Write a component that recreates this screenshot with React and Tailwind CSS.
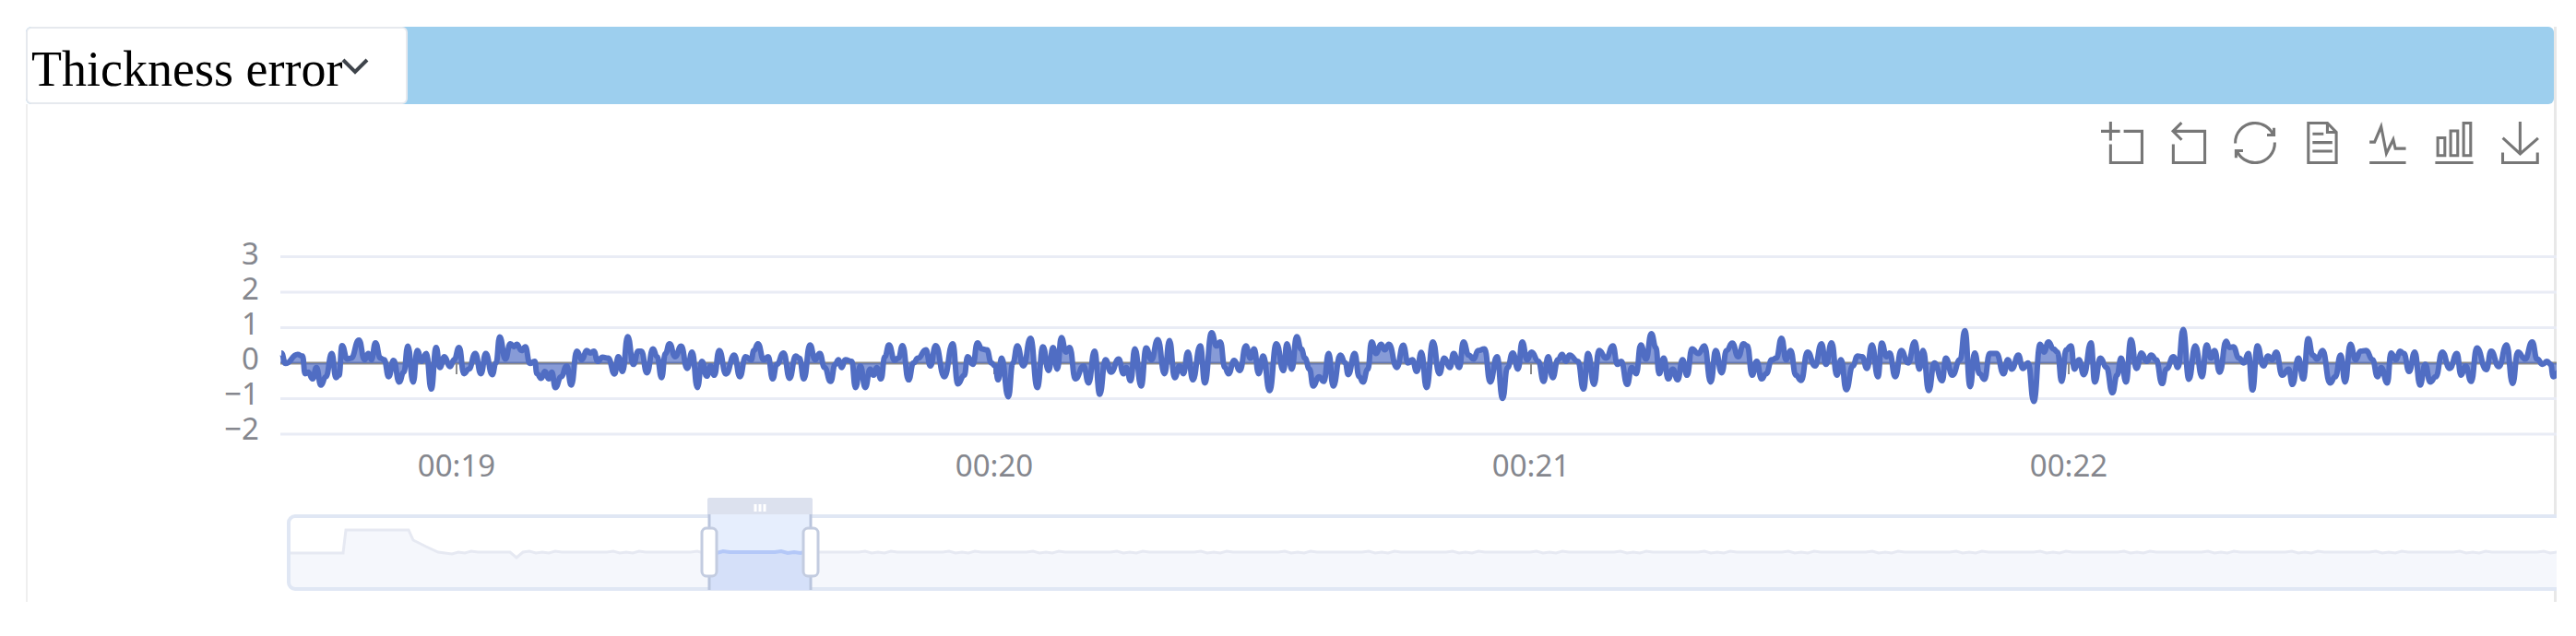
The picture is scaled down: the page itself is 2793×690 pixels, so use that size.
import { useState } from 'react';

const ERROR_TYPES = [ 'Thickness error', 'Width error', 'Temperature error' ];

const TOOLS = [
	{ title: 'Zoom', path: 'M0,13.5h26.9 M13.5,26.9V0 M32.1,13.5H58V58H13.5 V32.1' },
	{ title: 'Zoom reset', path: 'M20,1.4L7.9,13.5l12.3,12.3 M8.3,13.5H52.9v44.6 H8.3v-26' },
	{ title: 'Restore', path: 'M47,18.9h9.8V8.7 M56.3,20.1 C52.1,9,40.5,0.6,26.8,2.1C12.6,3.7,1.6,16.2,2.1,30.6 M13,41.1H3.1v10.2 M3.7,39.9c4.2,11.1,15.8,19.5,29.5,18 c14.2-1.6,25.2-14.1,24.7-28.5' },
	{ title: 'Data view', path: 'M17.5,17.3H33 M45.4,29.5h-28 M11.5,2v56H51V14.8L38.4,2H11.5z M38.4,2.2v12.7H51 M45.4,41.7h-28' },
	{ title: 'Line chart', path: 'M4.1,28.9h7.1l9.3-22l7.4,38l9.7-19.7l3,12.8h14.9M4.1,58h51.4' },
	{ title: 'Bar chart', path: 'M6.7,22.9h10V48h-10V22.9zM24.9,13h10v35h-10V13zM43.2,2h10v46h-10V2zM3.1,58h53.7' },
	{ title: 'Save as image', path: 'M4.7,22.9L29.3,45.5L54.7,23.4M4.6,43.6L4.6,58L53.8,58L53.8,43.6M29.2,45.1L29.2,0' },
];

// Gauge readings, one block per buffer: [ tick, raw count ].
const BLOCKS = [
	{
		start: 0,
		samples: [
			[ 37, 128 ], [ 48, 162 ], [ 80, 133 ], [ 93, 138 ], [ 100, 195 ], [ 108, 190 ], [ 120, 212 ], [ 130, 175 ], [ 142, 232 ], [ 155, 205 ],
			[ 171, 130 ], [ 182, 208 ], [ 190, 200 ], [ 198, 104 ], [ 212, 148 ], [ 222, 145 ], [ 243, 86 ], [ 258, 150 ], [ 268, 130 ], [ 276, 150 ],
			[ 287, 95 ], [ 300, 145 ], [ 310, 150 ], [ 322, 205 ], [ 335, 152 ], [ 350, 222 ], [ 362, 190 ], [ 373, 106 ], [ 387, 222 ], [ 398, 120 ],
			[ 410, 155 ], [ 422, 130 ], [ 435, 245 ], [ 448, 110 ], [ 458, 175 ], [ 470, 140 ], [ 485, 172 ], [ 496, 150 ], [ 509, 110 ], [ 522, 195 ],
			[ 535, 180 ], [ 552, 130 ], [ 567, 195 ], [ 580, 130 ], [ 597, 198 ], [ 607, 160 ], [ 617, 76 ], [ 632, 148 ], [ 645, 98 ], [ 655, 108 ],
			[ 662, 100 ], [ 675, 120 ], [ 685, 108 ], [ 697, 162 ], [ 710, 155 ], [ 716, 195 ], [ 727, 210 ], [ 737, 188 ], [ 747, 212 ], [ 755, 190 ],
			[ 765, 240 ], [ 780, 205 ], [ 795, 170 ], [ 807, 232 ], [ 822, 122 ], [ 835, 150 ], [ 848, 120 ], [ 858, 128 ], [ 867, 122 ], [ 877, 155 ],
			[ 890, 142 ], [ 905, 145 ], [ 922, 196 ], [ 932, 140 ], [ 943, 188 ], [ 957, 75 ], [ 972, 165 ], [ 985, 122 ], [ 993, 122 ], [ 1008, 192 ],
			[ 1024, 115 ], [ 1035, 140 ], [ 1047, 208 ], [ 1057, 130 ], [ 1068, 98 ], [ 1083, 140 ], [ 1099, 106 ], [ 1115, 178 ], [ 1128, 125 ], [ 1142, 240 ],
			[ 1154, 155 ], [ 1167, 203 ], [ 1177, 170 ], [ 1187, 200 ], [ 1200, 120 ], [ 1218, 196 ], [ 1240, 135 ], [ 1255, 205 ], [ 1270, 140 ], [ 1285, 150 ],
			[ 1292, 120 ], [ 1303, 98 ], [ 1318, 150 ], [ 1330, 140 ], [ 1342, 212 ], [ 1353, 165 ], [ 1371, 128 ], [ 1387, 210 ], [ 1403, 138 ], [ 1413, 145 ],
			[ 1425, 212 ], [ 1441, 102 ], [ 1455, 150 ], [ 1467, 130 ], [ 1480, 175 ], [ 1496, 220 ], [ 1508, 165 ], [ 1517, 150 ], [ 1525, 175 ], [ 1535, 150 ],
			[ 1552, 155 ], [ 1562, 240 ],
		],
	},
	{
		start: 1568,
		samples: [
			[ 7, 170 ], [ 20, 240 ], [ 33, 180 ], [ 42, 200 ], [ 50, 175 ], [ 62, 212 ], [ 72, 140 ], [ 83, 102 ], [ 98, 152 ], [ 108, 145 ],
			[ 119, 104 ], [ 135, 215 ], [ 148, 160 ], [ 160, 145 ], [ 181, 118 ], [ 193, 170 ], [ 207, 104 ], [ 230, 205 ], [ 252, 98 ], [ 266, 228 ],
			[ 283, 200 ], [ 292, 140 ], [ 306, 165 ], [ 318, 95 ], [ 330, 115 ], [ 343, 118 ], [ 355, 160 ], [ 365, 170 ], [ 373, 215 ], [ 382, 145 ],
			[ 400, 270 ], [ 412, 160 ], [ 424, 105 ], [ 440, 170 ], [ 459, 80 ], [ 477, 240 ], [ 492, 108 ], [ 507, 185 ], [ 519, 110 ], [ 530, 180 ],
			[ 541, 78 ], [ 553, 125 ], [ 563, 110 ], [ 578, 212 ], [ 600, 170 ], [ 613, 225 ], [ 629, 122 ], [ 643, 262 ], [ 658, 150 ], [ 673, 190 ],
			[ 693, 148 ], [ 706, 195 ], [ 713, 175 ], [ 725, 218 ], [ 736, 115 ], [ 753, 235 ], [ 766, 112 ], [ 780, 150 ], [ 797, 85 ], [ 815, 195 ],
			[ 828, 88 ], [ 842, 208 ], [ 855, 170 ], [ 865, 195 ], [ 877, 125 ], [ 890, 215 ], [ 910, 105 ], [ 922, 225 ], [ 940, 62 ], [ 953, 105 ],
			[ 963, 92 ], [ 975, 175 ], [ 985, 195 ], [ 1000, 152 ], [ 1015, 185 ], [ 1031, 105 ], [ 1043, 145 ], [ 1053, 115 ], [ 1065, 195 ], [ 1077, 138 ],
			[ 1094, 250 ], [ 1112, 98 ], [ 1131, 185 ], [ 1140, 98 ], [ 1153, 180 ], [ 1166, 75 ], [ 1178, 115 ], [ 1188, 145 ], [ 1200, 180 ], [ 1210, 235 ],
			[ 1225, 205 ], [ 1238, 220 ], [ 1251, 130 ], [ 1263, 235 ], [ 1282, 135 ], [ 1295, 160 ], [ 1303, 198 ], [ 1320, 130 ], [ 1332, 205 ], [ 1342, 222 ],
			[ 1355, 180 ], [ 1365, 92 ], [ 1377, 130 ], [ 1390, 100 ], [ 1400, 118 ], [ 1411, 100 ], [ 1432, 175 ], [ 1449, 103 ], [ 1462, 160 ], [ 1473, 150 ],
			[ 1485, 188 ], [ 1497, 126 ], [ 1511, 240 ], [ 1528, 92 ], [ 1545, 195 ], [ 1558, 145 ],
		],
	},
	{
		start: 3136,
		samples: [
			[ 5, 175 ], [ 15, 130 ], [ 30, 175 ], [ 41, 92 ], [ 55, 135 ], [ 68, 148 ], [ 80, 120 ], [ 97, 115 ], [ 112, 222 ], [ 130, 140 ],
			[ 145, 275 ], [ 158, 175 ], [ 172, 128 ], [ 186, 180 ], [ 197, 92 ], [ 210, 150 ], [ 222, 125 ], [ 240, 155 ], [ 254, 220 ], [ 266, 140 ],
			[ 278, 208 ], [ 292, 150 ], [ 303, 133 ], [ 313, 155 ], [ 323, 135 ], [ 345, 155 ], [ 360, 245 ], [ 372, 130 ], [ 388, 230 ], [ 401, 120 ],
			[ 420, 145 ], [ 438, 105 ], [ 450, 165 ], [ 460, 155 ], [ 476, 230 ], [ 488, 175 ], [ 500, 195 ], [ 512, 102 ], [ 526, 148 ], [ 540, 65 ],
			[ 552, 110 ], [ 561, 195 ], [ 573, 145 ], [ 585, 212 ], [ 597, 180 ], [ 610, 215 ], [ 623, 150 ], [ 635, 200 ], [ 648, 115 ], [ 665, 130 ],
			[ 681, 105 ], [ 698, 222 ], [ 711, 120 ], [ 727, 192 ], [ 740, 120 ], [ 755, 96 ], [ 771, 140 ], [ 785, 98 ], [ 795, 105 ], [ 808, 200 ],
			[ 820, 155 ], [ 833, 212 ], [ 845, 195 ], [ 860, 150 ], [ 872, 145 ], [ 886, 80 ], [ 898, 150 ], [ 910, 120 ], [ 924, 200 ], [ 938, 217 ],
			[ 955, 125 ], [ 975, 170 ], [ 992, 98 ], [ 1004, 165 ], [ 1019, 95 ], [ 1033, 200 ], [ 1044, 150 ], [ 1058, 247 ], [ 1075, 170 ], [ 1088, 138 ],
			[ 1100, 140 ], [ 1113, 178 ], [ 1126, 102 ], [ 1142, 205 ], [ 1152, 96 ], [ 1165, 140 ], [ 1173, 128 ], [ 1188, 205 ], [ 1204, 120 ], [ 1222, 160 ],
			[ 1240, 92 ], [ 1252, 180 ], [ 1262, 120 ], [ 1277, 250 ], [ 1292, 160 ], [ 1313, 218 ], [ 1322, 145 ], [ 1340, 200 ], [ 1360, 150 ], [ 1373, 56 ],
			[ 1387, 237 ], [ 1399, 128 ], [ 1412, 195 ], [ 1425, 213 ],
		],
	},
	{
		start: 4557,
		samples: [
			[ 18, 130 ], [ 36, 130 ], [ 55, 195 ], [ 66, 150 ], [ 77, 180 ], [ 94, 135 ], [ 106, 178 ], [ 120, 160 ], [ 135, 285 ], [ 152, 100 ],
			[ 162, 125 ], [ 174, 92 ], [ 187, 115 ], [ 198, 125 ], [ 209, 220 ], [ 221, 118 ], [ 234, 105 ], [ 243, 180 ], [ 255, 150 ], [ 268, 198 ],
			[ 287, 95 ], [ 297, 222 ], [ 312, 145 ], [ 328, 175 ], [ 344, 257 ], [ 356, 200 ], [ 367, 145 ], [ 380, 222 ], [ 393, 85 ], [ 408, 178 ],
			[ 421, 128 ], [ 435, 155 ], [ 447, 135 ], [ 460, 150 ], [ 476, 227 ], [ 487, 180 ], [ 506, 140 ], [ 518, 175 ], [ 532, 52 ], [ 547, 213 ],
			[ 564, 105 ], [ 582, 205 ], [ 594, 102 ], [ 606, 145 ], [ 615, 120 ], [ 629, 190 ], [ 646, 90 ], [ 655, 110 ], [ 665, 108 ], [ 680, 145 ],
			[ 693, 160 ], [ 705, 130 ], [ 716, 248 ], [ 729, 105 ], [ 745, 170 ], [ 757, 138 ], [ 768, 150 ], [ 779, 125 ], [ 795, 200 ], [ 812, 180 ],
			[ 822, 230 ], [ 838, 145 ], [ 851, 212 ], [ 864, 82 ], [ 876, 135 ], [ 888, 148 ], [ 902, 120 ], [ 922, 225 ], [ 936, 205 ], [ 950, 135 ],
			[ 962, 222 ], [ 976, 100 ], [ 990, 150 ], [ 1003, 122 ], [ 1018, 120 ], [ 1035, 150 ], [ 1048, 205 ], [ 1058, 175 ], [ 1074, 225 ], [ 1084, 128 ],
			[ 1097, 150 ], [ 1108, 122 ], [ 1118, 130 ], [ 1132, 188 ], [ 1147, 125 ], [ 1161, 232 ], [ 1175, 165 ], [ 1188, 222 ], [ 1203, 205 ], [ 1220, 125 ],
			[ 1240, 178 ], [ 1259, 130 ], [ 1270, 200 ], [ 1282, 170 ], [ 1297, 220 ], [ 1312, 112 ], [ 1337, 182 ], [ 1350, 122 ], [ 1370, 172 ], [ 1391, 102 ],
			[ 1407, 227 ], [ 1421, 125 ], [ 1440, 148 ], [ 1459, 92 ], [ 1472, 148 ], [ 1487, 165 ], [ 1498, 155 ], [ 1508, 165 ], [ 1515, 205 ], [ 1530, 190 ],
		],
	},
];

const COUNT_AT_ZERO = 161;
const COUNTS_PER_UNIT = 115;
const TICKS_PER_PX = 2.45;

const PLOT_LEFT = 274;
const ZERO_Y = 216;
const UNIT = 38.5;

const Y_LABELS = [ 3, 2, 1, 0, -1, -2 ];
const X_LABELS = [
	{ x: 465, text: '00:19' },
	{ x: 1048, text: '00:20' },
	{ x: 1630, text: '00:21' },
	{ x: 2213, text: '00:22' },
];

const points = BLOCKS.flatMap( ( { start, samples } ) => samples.map( ( [ tick, count ] ) => [
	260 + ( start + tick ) / TICKS_PER_PX,
	ZERO_Y + ( count - COUNT_AT_ZERO ) / COUNTS_PER_UNIT * UNIT,
] ) );

const smooth = list => list.map( ( [ x, y ], i ) => {
	if ( 0 === i ) {
		return `M${ x.toFixed( 1 ) },${ y.toFixed( 1 ) }`;
	}

	const [ px, py ] = list[ i - 1 ];
	const mid = ( ( px + x ) / 2 ).toFixed( 1 );

	return `C${ mid },${ py.toFixed( 1 ) } ${ mid },${ y.toFixed( 1 ) } ${ x.toFixed( 1 ) },${ y.toFixed( 1 ) }`;
} ).join( '' );

const linePath = smooth( points );
const areaPath = `${ linePath }V${ ZERO_Y }H${ PLOT_LEFT }Z`;

// Overview of the whole run, shown in the range slider.
const NOISE = [ 0, 1, 0, 0, -1, 0, 1, 0, 1, 0, 0, -1, 0 ];
const overview = [ [ 284, 422 ], [ 342, 422 ], [ 345, 397 ], [ 413, 397 ], [ 418, 408 ], [ 432, 415 ], [ 445, 421 ], [ 460, 423 ] ];

for ( let i = 0; i < 450; i++ ) {
	overview.push( [ 467 + i * 7, 9 === i ? 427 : 421 + NOISE[ i * i % NOISE.length ] ] );
}

const overviewLine = 'M' + overview.map( p => p.join( ',' ) ).join( 'L' );

const Chart = () => (
	<svg
		className="block w-full h-[475px] font-['Noto_Sans',sans-serif] text-[33px]"
		role="img"
		aria-label="Thickness error over time"
	>
		<defs>
			<clipPath id="selected">
				<rect x="739" y="380" width="110" height="82" />
			</clipPath>
		</defs>

		{ Y_LABELS.map( value => (
			<g key={ value }>
				<line
					x1={ PLOT_LEFT }
					x2="100%"
					y1={ ZERO_Y - value * UNIT }
					y2={ ZERO_Y - value * UNIT }
					stroke={ 0 === value ? '#8b8b8b' : '#e9ecf5' }
					strokeWidth="3"
				/>
				<text x="251" y={ 109 + ( 3 - value ) * 38 } textAnchor="end" fill="#85878e">
					{ value < 0 ? `−${ -value }` : value }
				</text>
			</g>
		) ) }

		{ X_LABELS.map( ( { x, text } ) => (
			<g key={ text }>
				<line x1={ x } x2={ x } y1={ ZERO_Y } y2={ ZERO_Y + 12 } stroke="#8b8b8b" strokeWidth="2" />
				<text x={ x } y="339" textAnchor="middle" fill="#85878e">{ text }</text>
			</g>
		) ) }

		<path d={ areaPath } fill="#5470c6" fillOpacity="0.7" />
		<path d={ linePath } fill="none" stroke="#506dc3" strokeWidth="6" strokeLinejoin="round" />

		<rect x="283" y="382" width="3600" height="79" rx="7" fill="#fff" />
		<path d={ `${ overviewLine }V460H284Z` } fill="#f5f7fc" />
		<path d={ overviewLine } fill="none" stroke="#e6e9f2" strokeWidth="3" />
		<rect x="283" y="382" width="3600" height="79" rx="7" fill="none" stroke="#e0e7f4" strokeWidth="4" />

		<rect x="737" y="362" width="114" height="20" rx="2" fill="#dce1ee" />
		<path d="M789,369v8M794,369v8M799,369v8" stroke="#fff" strokeWidth="3" />
		<g clipPath="url(#selected)">
			<rect x="739" y="380" width="110" height="82" fill="#e6eefd" />
			<path d={ `${ overviewLine }V462H284Z` } fill="#d5e0f9" />
			<path d={ overviewLine } fill="none" stroke="#b4c8f8" strokeWidth="4" />
		</g>
		<path d="M739,380V462M849,380V462" stroke="#bac5dd" strokeWidth="3" />
		<rect x="731" y="395" width="16" height="52" rx="5" fill="#fff" stroke="#c3cce0" strokeWidth="3" />
		<rect x="841" y="395" width="16" height="52" rx="5" fill="#fff" stroke="#c3cce0" strokeWidth="3" />
	</svg>
);

const App = () => {
	const [ type, setType ] = useState( ERROR_TYPES[0] );

	return (
		<main className="bg-white pt-[29px] pl-7 pr-[21px] pb-9">
			<section className="border-r-[3px] border-[#e8e8e8]">
				<header className="flex h-[84px] rounded-md bg-[#9dcfee]">
					<div className="relative w-[414px]">
						<select
							aria-label="Error type"
							value={ type }
							onChange={ e => setType( e.target.value ) }
							className="h-full w-full appearance-none rounded-md border-2 border-[#e6e9ee] bg-white pt-2 pl-1 font-['Liberation_Serif',serif] text-[54px] leading-none text-black"
						>
							{ ERROR_TYPES.map( name => <option key={ name }>{ name }</option> ) }
						</select>
						<svg className="pointer-events-none absolute left-[342px] top-[34px] h-[18px] w-[30px]" viewBox="0 0 30 18" fill="none" stroke="#3f444b" strokeWidth="4">
							<path d="M2,2L15,15L28,2" />
						</svg>
					</div>
				</header>

				<div className="border-l-2 border-[#efefef]">
					<div className="flex justify-end gap-[26px] pt-[19px] pr-[13px]">
						{ TOOLS.map( ( { title, path } ) => (
							<button key={ title } type="button" title={ title } aria-label={ title }>
								<svg className="block size-[46px] overflow-visible" viewBox="0 0 60 60" fill="none" stroke="#777" strokeWidth="4">
									<path d={ path } />
								</svg>
							</button>
						) ) }
					</div>

					<div className="-mr-[3px] overflow-hidden">
						<Chart />
					</div>
				</div>
			</section>
		</main>
	);
};

export default App;
